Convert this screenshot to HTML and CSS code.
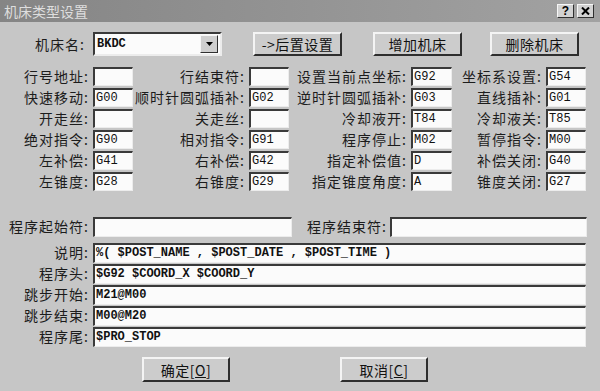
FILE: index.html
```html
<!DOCTYPE html>
<html lang="zh-CN">
<head>
    <meta charset="UTF-8">
    <title>机床类型设置</title>
    <link rel="stylesheet" href="styles.css">
</head>
<body>
    <div class="window">
        <!-- Barra de título -->
        <div class="titlebar">
            <span class="title">机床类型设置</span>
            <div class="title-btns">
                <span class="tbtn tbtn-help">?</span>
                <span class="tbtn">
                    <svg width="9" height="8" viewBox="0 0 9 8"><path d="M1 0.5 L8 7.5 M8 0.5 L1 7.5" stroke="#000" stroke-width="2"/></svg>
                </span>
            </div>
        </div>

        <div class="content">
            <!-- Linha do topo -->
            <div class="top-row">
                <span class="lbl">机床名:</span>
                <div class="combo">
                    <span class="combo-text">BKDC</span>
                    <span class="combo-btn">
                        <svg width="7" height="4" viewBox="0 0 7 4"><path d="M0 0 H7 L3.5 4 Z" fill="#000"/></svg>
                    </span>
                </div>
                <button class="btn btn-post">-&gt;后置设置</button>
                <button class="btn btn-add">增加机床</button>
                <button class="btn btn-del">删除机床</button>
            </div>

            <!-- Códigos -->
            <div class="grid">
                <span class="lbl">行号地址:</span><span class="field"></span>
                <span class="lbl">行结束符:</span><span class="field"></span>
                <span class="lbl">设置当前点坐标:</span><span class="field">G92</span>
                <span class="lbl">坐标系设置:</span><span class="field">G54</span>

                <span class="lbl">快速移动:</span><span class="field">G00</span>
                <span class="lbl">顺时针圆弧插补:</span><span class="field">G02</span>
                <span class="lbl">逆时针圆弧插补:</span><span class="field">G03</span>
                <span class="lbl">直线插补:</span><span class="field">G01</span>

                <span class="lbl">开走丝:</span><span class="field"></span>
                <span class="lbl">关走丝:</span><span class="field"></span>
                <span class="lbl">冷却液开:</span><span class="field">T84</span>
                <span class="lbl">冷却液关:</span><span class="field">T85</span>

                <span class="lbl">绝对指令:</span><span class="field">G90</span>
                <span class="lbl">相对指令:</span><span class="field">G91</span>
                <span class="lbl">程序停止:</span><span class="field">M02</span>
                <span class="lbl">暂停指令:</span><span class="field">M00</span>

                <span class="lbl">左补偿:</span><span class="field">G41</span>
                <span class="lbl">右补偿:</span><span class="field">G42</span>
                <span class="lbl">指定补偿值:</span><span class="field">D</span>
                <span class="lbl">补偿关闭:</span><span class="field">G40</span>

                <span class="lbl">左锥度:</span><span class="field">G28</span>
                <span class="lbl">右锥度:</span><span class="field">G29</span>
                <span class="lbl">指定锥度角度:</span><span class="field">A</span>
                <span class="lbl">锥度关闭:</span><span class="field">G27</span>
            </div>

            <!-- Cabeçalho e rodapé do programa -->
            <div class="line-row line-first">
                <span class="lbl">程序起始符:</span><span class="field field-start"></span>
                <span class="lbl lbl-end">程序结束符:</span><span class="field field-end"></span>
            </div>
            <div class="lines">
                <div class="line-row"><span class="lbl">说明:</span><span class="field field-long">%( $POST_NAME , $POST_DATE , $POST_TIME )</span></div>
                <div class="line-row"><span class="lbl">程序头:</span><span class="field field-long">$G92 $COORD_X $COORD_Y</span></div>
                <div class="line-row"><span class="lbl">跳步开始:</span><span class="field field-long">M21@M00</span></div>
                <div class="line-row"><span class="lbl">跳步结束:</span><span class="field field-long">M00@M20</span></div>
                <div class="line-row"><span class="lbl">程序尾:</span><span class="field field-long">$PRO_STOP</span></div>
            </div>

            <div class="actions">
                <button class="btn btn-ok">确定[<u>O</u>]</button>
                <button class="btn btn-cancel">取消[<u>C</u>]</button>
            </div>
        </div>
    </div>
</body>
</html>
```

FILE: styles.css
```css
body {
    margin: 0;
    padding: 0;
    background: #c6c6c6;
    font-family: "Noto Sans CJK SC", "Liberation Sans", sans-serif;
}
.window {
    width: 600px;
    height: 391px;
    background: #c6c6c6;
    overflow: hidden;
}
.titlebar {
    height: 22px;
    background: linear-gradient(to right, #858585, #a2a2a2);
    display: flex;
    align-items: center;
    justify-content: space-between;
    padding: 0 6px 0 4px;
    box-sizing: border-box;
}
.title {
    color: #dedede;
    font-size: 14px;
    line-height: 22px;
}
.title-btns {
    display: flex;
    gap: 3px;
}
.tbtn {
    width: 17px;
    height: 14px;
    box-sizing: border-box;
    background: #d2d2d2;
    border: 1px solid;
    border-color: #f6f6f6 #303030 #303030 #f6f6f6;
    display: flex;
    align-items: center;
    justify-content: center;
    font-family: "Liberation Sans", sans-serif;
    font-weight: bold;
    font-size: 12px;
    color: #000;
}
.content {
    padding-top: 10px;
}
.lbl {
    font-size: 14px;
    letter-spacing: 1px;
    color: #1c1c1c;
    text-align: right;
    padding-right: 4px;
    white-space: nowrap;
    line-height: 19px;
}
.top-row {
    display: flex;
    align-items: center;
    height: 24px;
}
.top-row .lbl {
    width: 93px;
    box-sizing: border-box;
    padding-right: 8px;
}
.combo {
    width: 129px;
    height: 24px;
    box-sizing: border-box;
    background: #fbfbfb;
    border: 2px solid;
    border-color: #3a3a3a #ececec #ececec #3a3a3a;
    display: flex;
    align-items: center;
    justify-content: space-between;
    padding: 0 2px 0 2px;
}
.combo-text, .field {
    font-family: "Liberation Mono", monospace;
    font-size: 12px;
    color: #111;
}
.combo-text, .field-long {
    font-weight: bold;
}
.combo-btn {
    width: 18px;
    height: 18px;
    box-sizing: border-box;
    background: #cfcfcf;
    border: 1px solid;
    border-color: #f6f6f6 #303030 #303030 #f6f6f6;
    display: flex;
    align-items: center;
    justify-content: center;
}
.btn {
    height: 24px;
    width: 89px;
    box-sizing: border-box;
    background: #cccccc;
    border: 2px solid;
    border-color: #f4f4f4 #2e2e2e #2e2e2e #f4f4f4;
    font-family: "Noto Sans CJK SC", sans-serif;
    font-size: 14px;
    letter-spacing: 0.5px;
    color: #111;
    padding: 0;
    line-height: 18px;
}
.btn-post {
    margin-left: 31px;
}
.btn-add {
    margin-left: 31px;
}
.btn-del {
    margin-left: 28px;
}
.grid {
    display: grid;
    grid-template-columns: 93px 40px 116px 40px 122px 41px 94px 40px;
    grid-auto-rows: 21px;
    margin-top: 11px;
}
.field {
    height: 19px;
    box-sizing: border-box;
    background: #fbfbfb;
    border: 2px solid;
    border-width: 2px 1px 1px 2px;
    border-color: #3a3a3a #ececec #ececec #3a3a3a;
    padding-left: 1px;
    line-height: 16px;
    white-space: pre;
    overflow: hidden;
}
.line-row {
    display: flex;
    height: 21px;
}
.line-row .lbl {
    width: 93px;
    box-sizing: border-box;
}
.line-first {
    margin-top: 24px;
    height: 26px;
}
.line-first .field {
    height: 20px;
}
.field-start {
    width: 199px;
}
.line-row .lbl-end {
    width: 98px;
    padding-right: 3px;
}
.field-end {
    width: 197px;
}
.field-long {
    width: 493px;
    height: 20px;
}
.actions {
    display: flex;
    margin-top: 9px;
    padding-left: 142px;
    gap: 110px;
}
.actions .btn {
    width: 88px;
    height: 25px;
}
```
